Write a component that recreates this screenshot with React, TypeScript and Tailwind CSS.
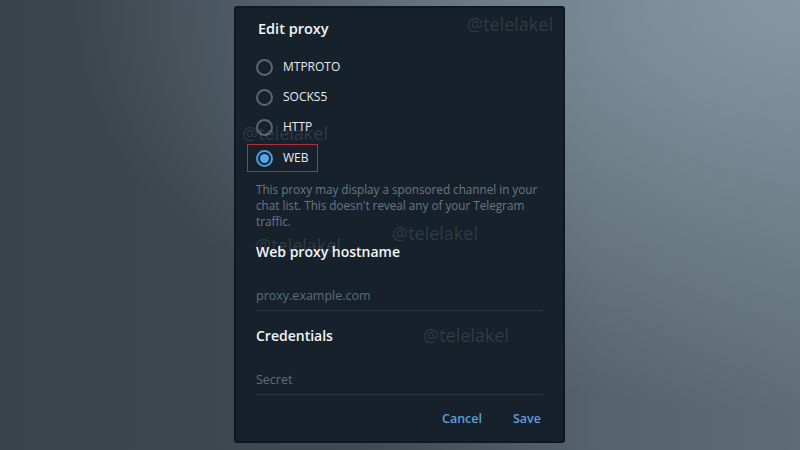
import React from "react";

const font = { fontFamily: '"Open Sans", "Noto Sans", sans-serif' };

function Radio({ label, checked }: { label: string; checked?: boolean }) {
  return (
    <div className="relative flex h-[30px] items-center gap-[10px]">
      {checked ? (
        <span className="flex h-[17px] w-[17px] items-center justify-center rounded-full border-2 border-[#4c9ce2]">
          <span className="h-[9px] w-[9px] rounded-full bg-[#5aa6ea]" />
        </span>
      ) : (
        <span className="h-[17px] w-[17px] rounded-full border-2 border-[#5b6670]" />
      )}
      <span className="text-[12px] text-[#e6ebef]">{label}</span>
      {checked && (
        <span className="pointer-events-none absolute left-[-9px] top-[1px] h-[28px] w-[71px] border border-[#b3303a]" />
      )}
    </div>
  );
}

function Field({ placeholder }: { placeholder: string }) {
  return (
    <div className="border-b border-[#2a3642] pb-[5px] text-[12.5px] leading-[18px] text-[#5f6c78]">
      {placeholder}
    </div>
  );
}

function Mark({ className }: { className: string }) {
  return (
    <span className={"pointer-events-none absolute text-[18px] text-white/[0.12] " + className}>
      @telelakel
    </span>
  );
}

export default function App() {
  return (
    <div
      style={font}
      className="relative flex h-[450px] w-[800px] items-start justify-center overflow-hidden bg-[radial-gradient(ellipse_at_top_right,#8498a4_0%,rgba(132,152,164,0)_65%),linear-gradient(90deg,#3a434b_0%,#404a53_45%,#56626c_75%,#5e6c76_100%)] pt-[6px]"
    >
      <div className="ml-[-1px] flex h-[437px] w-[331px] flex-col rounded-[3px] border-2 border-[#0f1720] bg-[#17212b] px-[20px] pt-[11px]">
        <div className="ml-[2px] text-[14.5px] font-semibold leading-[20px] text-[#f3f5f7]">Edit proxy</div>
        <div className="mt-[13px] flex flex-col">
          <Radio label="MTPROTO" />
          <Radio label="SOCKS5" />
          <Radio label="HTTP" />
          <div className="mt-[1px]">
            <Radio label="WEB" checked />
          </div>
        </div>
        <p className="mt-[8px] w-[292px] text-[11.7px] leading-[16px] text-[#6b7782]">
          This proxy may display a sponsored channel in your chat list. This doesn't reveal any of your Telegram traffic.
        </p>
        <div className="mt-[13px] text-[14px] font-semibold leading-[20px] text-[#f3f5f7]">Web proxy hostname</div>
        <div className="mt-[25px]">
          <Field placeholder="proxy.example.com" />
        </div>
        <div className="mt-[15px] text-[14px] font-semibold leading-[20px] text-[#f3f5f7]">Credentials</div>
        <div className="mt-[25px]">
          <Field placeholder="Secret" />
        </div>
        <div className="mt-[15px] flex justify-end gap-[31px] pr-[2px] text-[12.5px] font-semibold leading-[18px] text-[#5c9fdc]">
          <span>Cancel</span>
          <span>Save</span>
        </div>
      </div>
      <Mark className="left-[467px] top-[11px]" />
      <Mark className="left-[242px] top-[120px]" />
      <Mark className="left-[392px] top-[220px]" />
      <Mark className="left-[255px] top-[232px]" />
      <Mark className="left-[423px] top-[322px]" />
    </div>
  );
}
